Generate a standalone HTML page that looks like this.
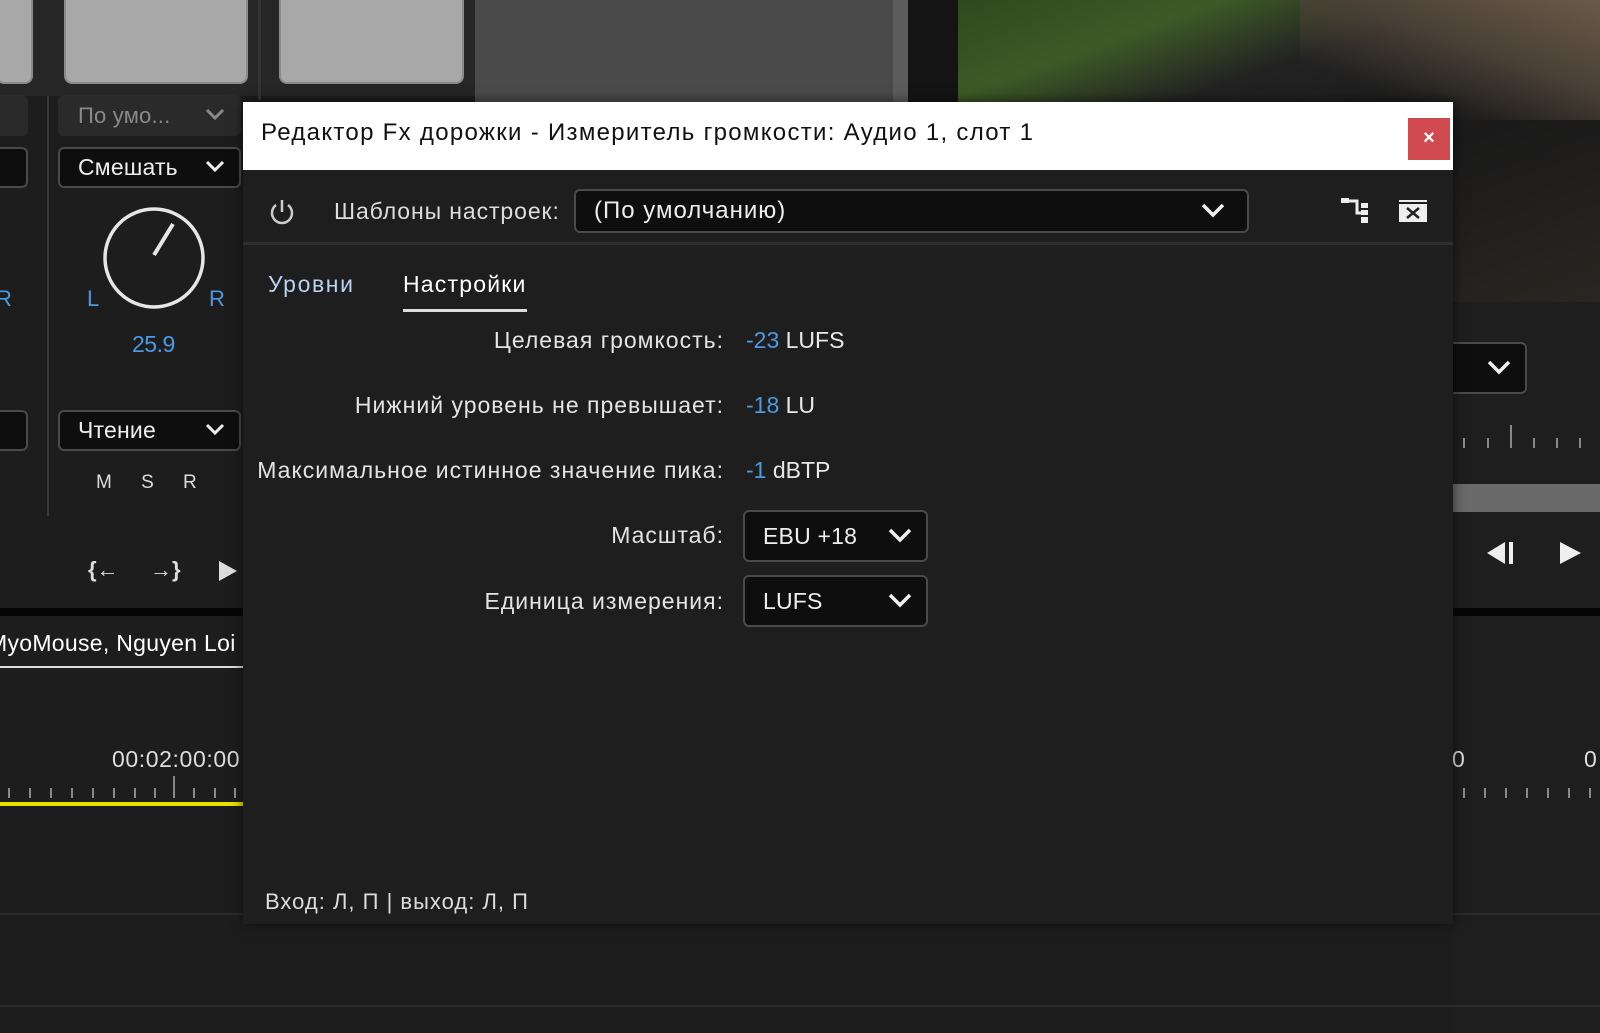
<!DOCTYPE html>
<html><head><meta charset="utf-8"><style>
*{margin:0;padding:0;box-sizing:border-box}
body{width:1600px;height:1033px;overflow:hidden;background:#1d1d1d;position:relative;font-family:"Liberation Sans","Noto Sans CJK JP",sans-serif;color:#e8e8e8}
.a{position:absolute}
.pad{position:absolute;background:#a8a8a8;border-radius:0 0 8px 8px;border:2px solid #8a8a8a;border-top:none}
.dd{position:absolute;border:2px solid #4a4a4a;border-radius:6px;background:#0e0e0e;font-size:23px;color:#eee;padding-left:18px;display:flex;align-items:center;letter-spacing:0.2px}
.chev{position:absolute;right:14px;top:50%;margin-top:-8px}
.lbl{position:absolute;right:876px;font-size:23px;color:#e4e4e4;white-space:nowrap;letter-spacing:1px}
.val{position:absolute;left:746px;font-size:23px;color:#e8e8e8;white-space:nowrap;letter-spacing:0px}
.val b{color:#4a9ae2;font-weight:normal}
.tick{position:absolute;width:2px;background:#888}
</style></head><body>

<div class="a" style="left:0;top:0;width:475px;height:96px;background:#262626"></div>
<div class="pad" style="left:-4px;top:0;width:37px;height:84px"></div>
<div class="pad" style="left:64px;top:0;width:184px;height:84px"></div>
<div class="pad" style="left:279px;top:0;width:185px;height:84px"></div>
<div class="a" style="left:258px;top:0;width:3px;height:100px;background:#333"></div>
<div class="a" style="left:475px;top:0;width:433px;height:102px;background:#4a4a4a"></div>
<div class="a" style="left:893px;top:0;width:15px;height:102px;background:#5c5c5c"></div>
<div class="a" style="left:908px;top:0;width:52px;height:102px;background:#141414"></div>

<div class="a" style="left:47px;top:96px;width:2px;height:420px;background:#3a3a3a"></div>
<div class="dd" style="left:-10px;top:95px;width:38px;height:41px;background:#2a2a2a;border-color:#2a2a2a"></div>
<div class="dd" style="left:58px;top:95px;width:183px;height:41px;background:#2a2a2a;border-color:#2a2a2a;color:#8a8a8a;font-size:22px">По умо...
<svg class="chev" width="20" height="14"><path d="M2 2l8 8 8-8" stroke="#888" stroke-width="3" fill="none"/></svg></div>
<div class="dd" style="left:-10px;top:147px;width:38px;height:41px"></div>
<div class="dd" style="left:58px;top:147px;width:183px;height:41px">Смешать
<svg class="chev" width="20" height="14"><path d="M2 2l8 8 8-8" stroke="#eee" stroke-width="3" fill="none"/></svg></div>
<svg class="a" style="left:98px;top:204px" width="112" height="112"><circle cx="56" cy="54" r="49" stroke="#e6e6e6" stroke-width="3.5" fill="none"/><path d="M56 51L75 20" stroke="#e6e6e6" stroke-width="4"/></svg>
<div class="a" style="left:87px;top:286px;color:#4a9ae2;font-size:22px">L</div>
<div class="a" style="left:209px;top:286px;color:#4a9ae2;font-size:22px">R</div>
<div class="a" style="left:-4px;top:286px;color:#4a9ae2;font-size:22px">R</div>
<div class="a" style="left:132px;top:331px;color:#4a9ae2;font-size:23px;letter-spacing:-0.5px">25.9</div>
<div class="dd" style="left:-10px;top:410px;width:38px;height:41px"></div>
<div class="dd" style="left:58px;top:410px;width:183px;height:41px">Чтение
<svg class="chev" width="20" height="14"><path d="M2 2l8 8 8-8" stroke="#eee" stroke-width="3" fill="none"/></svg></div>
<div class="a" style="left:96px;top:472px;font-size:19px;color:#ddd;word-spacing:22px;letter-spacing:1px">M S R</div>
<div class="a" style="left:88px;top:557px;font-size:22px;color:#ddd;font-weight:bold">{←</div>
<div class="a" style="left:150px;top:557px;font-size:22px;color:#ddd;font-weight:bold">→}</div>
<svg class="a" style="left:218px;top:560px" width="20" height="22"><path d="M1 1L19 11L1 21Z" fill="#ddd"/></svg>
<div class="a" style="left:0;top:608px;width:243px;height:8px;background:#050505"></div>
<div class="a" style="left:0;top:630px;width:243px;height:34px;overflow:hidden"><div class="a" style="left:-12px;top:0;font-size:23px;color:#fff;white-space:nowrap;letter-spacing:0.3px">MyoMouse, Nguyen Loi</div></div>
<div class="a" style="left:0;top:666px;width:243px;height:2px;background:#ddd"></div>
<div class="a" style="left:112px;top:746px;font-size:23px;color:#ddd;letter-spacing:0.6px">00:02:00:00</div>
<div class="a" style="left:0;top:802px;width:243px;height:4px;background:#e8e000"></div>

<div class="a" style="left:958px;top:0;width:642px;height:302px;background:linear-gradient(160deg,#2c4a1c 0%,#3d5a26 18%,#222 34%,#1a1a1a 60%,#2a2622 100%)"></div>
<div class="a" style="left:1300px;top:0;width:300px;height:120px;background:linear-gradient(200deg,#6a5a48 0%,#4a4036 40%,rgba(30,30,30,0) 75%)"></div>
<div class="a" style="left:1453px;top:302px;width:147px;height:731px;background:#1e1e1e"></div>
<div class="dd" style="left:1400px;top:342px;width:127px;height:52px"><svg class="chev" width="24" height="16"><path d="M2 2l10 10 10-10" stroke="#eee" stroke-width="3.5" fill="none"/></svg></div>
<div class="a" style="left:1453px;top:484px;width:147px;height:28px;background:#6a6a6a"></div>
<svg class="a" style="left:1485px;top:541px" width="30" height="24"><path d="M20 1L2 12L20 23Z" fill="#eee"/><rect x="24" y="1" width="4" height="22" fill="#eee"/></svg>
<svg class="a" style="left:1559px;top:541px" width="24" height="24"><path d="M1 1L22 12L1 23Z" fill="#eee"/></svg>
<div class="a" style="left:1453px;top:608px;width:147px;height:8px;background:#050505"></div>
<div class="a" style="left:1452px;top:746px;font-size:23px;color:#ddd">0</div>
<div class="a" style="left:1584px;top:746px;font-size:23px;color:#ddd">0</div>

<div class="a" style="left:0;top:913px;width:1600px;height:2px;background:#2c2c2c"></div>
<div class="a" style="left:0;top:1005px;width:1600px;height:2px;background:#2c2c2c"></div>

<div class="a" style="left:243px;top:102px;width:1210px;height:822px;background:#1e1e1e;box-shadow:0 0 12px rgba(0,0,0,.6)"></div>
<div class="a" style="left:243px;top:102px;width:1210px;height:68px;background:#fff"></div>
<div class="a" style="left:261px;top:119px;font-size:24px;color:#111;white-space:nowrap;letter-spacing:1.3px">Редактор Fx дорожки - Измеритель громкости: Аудио 1, слот 1</div>
<div class="a" style="left:1408px;top:118px;width:42px;height:42px;background:#d04a4f;color:#fff;font-size:20px;font-weight:bold;text-align:center;line-height:40px">×</div>

<svg class="a" style="left:268px;top:198px" width="28" height="28"><path d="M8 7A10 10 0 1 0 20 7" stroke="#ccc" stroke-width="2.5" fill="none"/><path d="M14 2v12" stroke="#ccc" stroke-width="2.5"/></svg>
<div class="a" style="left:334px;top:198px;font-size:23px;color:#ddd;letter-spacing:0.9px">Шаблоны настроек:</div>
<div class="dd" style="left:574px;top:189px;width:675px;height:44px;font-size:24px;letter-spacing:1px">(По умолчанию)
<svg class="chev" width="24" height="16" style="right:22px"><path d="M2 2l10 10 10-10" stroke="#eee" stroke-width="3.5" fill="none"/></svg></div>
<svg class="a" style="left:1340px;top:197px" width="30" height="28"><rect x="1" y="1" width="8" height="5" fill="#eee"/><path d="M9 4h8v12h5" stroke="#eee" stroke-width="3" fill="none"/><rect x="21" y="6" width="7" height="5" fill="#eee"/><rect x="21" y="13" width="7" height="5" fill="#eee"/><rect x="21" y="20" width="7" height="6" fill="#eee"/></svg>
<svg class="a" style="left:1398px;top:199px" width="30" height="24"><rect x="1" y="1" width="28" height="2" fill="#eee"/><rect x="1" y="5" width="28" height="18" fill="#eee"/><path d="M9 9l12 10M21 9L9 19" stroke="#222" stroke-width="2.5"/></svg>
<div class="a" style="left:243px;top:242px;width:1210px;height:3px;background:#2e2e2e"></div>

<div class="a" style="left:268px;top:271px;font-size:23px;color:#b8d2f0;letter-spacing:1.6px">Уровни</div>
<div class="a" style="left:403px;top:271px;font-size:23px;color:#fff;letter-spacing:1.2px">Настройки</div>
<div class="a" style="left:403px;top:309px;width:124px;height:3px;background:#ddd"></div>

<div class="lbl" style="top:327px">Целевая громкость:</div>
<div class="val" style="top:327px"><b>-23</b> LUFS</div>
<div class="lbl" style="top:392px">Нижний уровень не превышает:</div>
<div class="val" style="top:392px"><b>-18</b> LU</div>
<div class="lbl" style="top:457px">Максимальное истинное значение пика:</div>
<div class="val" style="top:457px"><b>-1</b> dBTP</div>
<div class="lbl" style="top:522px">Масштаб:</div>
<div class="dd" style="left:743px;top:510px;width:185px;height:52px">EBU +18
<svg class="chev" width="24" height="16"><path d="M2 2l10 10 10-10" stroke="#eee" stroke-width="3.5" fill="none"/></svg></div>
<div class="lbl" style="top:588px">Единица измерения:</div>
<div class="dd" style="left:743px;top:575px;width:185px;height:52px">LUFS
<svg class="chev" width="24" height="16"><path d="M2 2l10 10 10-10" stroke="#eee" stroke-width="3.5" fill="none"/></svg></div>

<div class="a" style="left:265px;top:889px;font-size:22px;color:#ddd;letter-spacing:1px">Вход: Л, П | выход: Л, П</div>

<div class="tick" style="left:8px;top:788px;height:10px"></div>
<div class="tick" style="left:29px;top:788px;height:10px"></div>
<div class="tick" style="left:50px;top:788px;height:10px"></div>
<div class="tick" style="left:71px;top:788px;height:10px"></div>
<div class="tick" style="left:92px;top:788px;height:10px"></div>
<div class="tick" style="left:113px;top:788px;height:10px"></div>
<div class="tick" style="left:134px;top:788px;height:10px"></div>
<div class="tick" style="left:154px;top:788px;height:10px"></div>
<div class="tick" style="left:173px;top:776px;height:22px"></div>
<div class="tick" style="left:193px;top:788px;height:10px"></div>
<div class="tick" style="left:214px;top:788px;height:10px"></div>
<div class="tick" style="left:234px;top:788px;height:10px"></div>
<div class="tick" style="left:1463px;top:438px;height:10px"></div>
<div class="tick" style="left:1487px;top:438px;height:10px"></div>
<div class="tick" style="left:1510px;top:425px;height:23px"></div>
<div class="tick" style="left:1533px;top:438px;height:10px"></div>
<div class="tick" style="left:1556px;top:438px;height:10px"></div>
<div class="tick" style="left:1579px;top:438px;height:10px"></div>
<div class="tick" style="left:1463px;top:788px;height:10px"></div>
<div class="tick" style="left:1484px;top:788px;height:10px"></div>
<div class="tick" style="left:1505px;top:788px;height:10px"></div>
<div class="tick" style="left:1526px;top:788px;height:10px"></div>
<div class="tick" style="left:1547px;top:788px;height:10px"></div>
<div class="tick" style="left:1568px;top:788px;height:10px"></div>
<div class="tick" style="left:1589px;top:788px;height:10px"></div>
</body></html>
